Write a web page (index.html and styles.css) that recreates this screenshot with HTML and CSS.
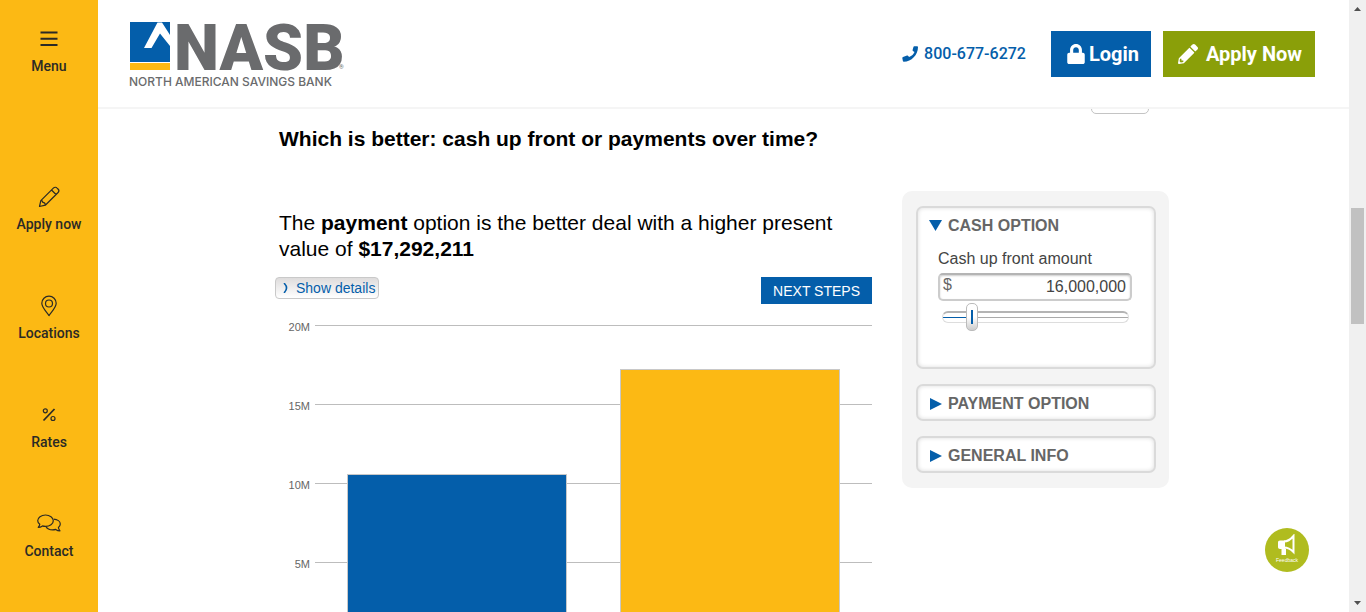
FILE: index.html
```html
<!DOCTYPE html>
<html lang="en">
<head>
<meta charset="utf-8">
<meta name="viewport" content="width=device-width, initial-scale=1">
<title>NASB - Cash up front or payments over time</title>
<link rel="stylesheet" href="styles.css">
</head>
<body>
<div class="shell">
  <nav class="sidebar" aria-label="Main">
    <button class="side-item side-menu" type="button">
      <svg class="side-icon" viewBox="0 0 24 24"><path d="M3.500 4.500h17M3.500 10.800h17M3.500 17h17" stroke-width="2"/></svg>
      <span>Menu</span>
    </button>
    <a class="side-item" href="#apply">
      <svg class="side-icon" viewBox="0 0 24 24"><path d="M2.500 21.500l1.300-5.800L16.600 2.900c1-1 2.600-.8 3.500.2l.9.900c1 1 1.100 2.500.1 3.500L8.300 20.200zM3.800 15.700c1.300-.1 2 .5 1.900 1.700 1.500-.1 2.600.8 2.600 2.800M14.500 5l4.500 4.500"/></svg>
      <span>Apply now</span>
    </a>
    <a class="side-item" href="#locations">
      <svg class="side-icon" viewBox="0 0 24 24"><path d="M12 21.600C9.800 18 4.800 13.600 4.800 9.300a7.200 7.200 0 0 1 14.400 0c0 4.300-5 8.700-7.200 12.300z"/><circle cx="12" cy="9.500" r="3.500"/></svg>
      <span>Locations</span>
    </a>
    <a class="side-item" href="#rates">
      <svg class="side-icon" viewBox="0 0 24 24"><path d="M17.500 6L6.500 17.500" stroke-width="1.800"/><circle cx="8.300" cy="7.800" r="2"/><circle cx="16" cy="15.500" r="2"/></svg>
      <span>Rates</span>
    </a>
    <a class="side-item" href="#contact">
      <svg class="side-icon" viewBox="0 0 24 24"><path d="M8.500 3c4.300 0 7.800 2.500 7.800 5.700s-3.500 5.700-7.800 5.700c-1.100 0-2.100-.1-3-.5-1.300.9-2.700 1.400-4.300 1.400 1-1.100 1.500-2.100 1.600-3.100C1.500 11.200.700 10 .700 8.700.700 5.500 4.200 3 8.500 3z"/><path d="M16.600 7.100c3.800.2 6.700 2.300 6.700 5 0 1.300-.7 2.500-1.900 3.400.1 1.200.6 2.200 1.600 3.300-1.700 0-3.100-.5-4.300-1.400-1 .3-1.900.5-3 .5-3.100 0-5.700-1.300-6.800-3.400"/></svg>
      <span>Contact</span>
    </a>
  </nav>

  <div class="page">
    <header class="header">
      <a class="brand" href="#home" aria-label="NASB home">
        <svg class="logo" width="216" height="68" viewBox="0 0 216 68">
          <path class="logo-blue" d="M1 2h40v40H1z"/>
          <path class="logo-yellow" d="M1 43h40v7H1z"/>
          <path class="logo-white" d="M28.500 2.500H33L41 15v11l-10-12.500L22.500 28H15z"/>
          <text class="logo-name" x="45" y="50">NASB</text>
          <text class="logo-tag" x="0" y="66">NORTH AMERICAN SAVINGS BANK</text>
          <text class="logo-mark" x="210" y="49">®</text>
        </svg>
      </a>
      <div class="header-actions">
        <a class="phone" href="tel:8006776272">
          <svg width="16" height="16" viewBox="0 0 16 16"><path d="M15.200.300l-2.900-.1c-.4 0-.7.200-.8.500l-.9 3.400c-.1.300 0 .7.300.9l1.600 1.100c-.9 2.200-2.600 3.900-5.400 4.900L5.900 9.700c-.3-.3-.6-.3-.9-.2l-4 1.400c-.5.200-.8.500-.7 1l.6 3c.1.500.4.800.9.800C9.500 15.500 15.900 9 16 1.200c0-.5-.3-.9-.8-.9z"/></svg>
          <span>800-677-6272</span>
        </a>
        <a class="cta cta-login" href="#login">
          <svg width="18" height="20" viewBox="0 0 448 512"><path d="M400 224h-24v-72C376 68.200 307.800 0 224 0S72 68.200 72 152v72H48c-26.500 0-48 21.500-48 48v192c0 26.500 21.500 48 48 48h352c26.500 0 48-21.500 48-48V272c0-26.500-21.500-48-48-48zm-104 0H152v-72c0-39.700 32.300-72 72-72s72 32.300 72 72v72z"/></svg>
          <span>Login</span>
        </a>
        <a class="cta cta-apply" href="#apply-now">
          <svg width="20" height="20" viewBox="0 0 512 512"><path d="M497.900 142.100l-46.100 46.100c-4.700 4.700-12.300 4.700-17 0l-111-111c-4.700-4.700-4.700-12.300 0-17l46.100-46.100c18.700-18.700 49.100-18.700 67.900 0l60.100 60.100c18.800 18.700 18.800 49.100 0 67.900zM284.200 99.800L21.600 362.400.400 483.900c-2.900 16.400 11.400 30.600 27.800 27.800l121.500-21.300 262.600-262.600c4.700-4.700 4.700-12.300 0-17l-111-111c-4.800-4.700-12.400-4.700-17.100 0zM88 424h48v36.300l-64.500 11.300-31.100-31.100L51.700 376H88v48z"/></svg>
          <span>Apply Now</span>
        </a>
      </div>
    </header>

    <main class="content">
      <div class="tools"><button class="tool" type="button" aria-label="Print"></button></div>
      <h1 class="title">Which is better: cash up front or payments over time?</h1>
      <div class="columns">
        <section class="results">
          <p class="summary">The <b>payment</b> option is the better deal with a higher present value of <b>$17,292,211</b></p>
          <div class="actions">
            <button class="details" type="button"><svg width="6" height="10" viewBox="0 0 6 10"><path d="M1 0c3.500 3.500 3.500 6.500 0 10"/></svg>Show details</button>
            <button class="next" type="button">NEXT STEPS</button>
          </div>
          <div class="chart">
            <div class="scale">
              <div class="tick"><span>20M</span><i></i></div>
              <div class="tick"><span>15M</span><i></i></div>
              <div class="tick"><span>10M</span><i></i></div>
              <div class="tick"><span>5M</span><i></i></div>
            </div>
            <div class="bars">
              <div class="bar bar-cash" style="height:53%"></div>
              <div class="bar bar-payment" style="height:86%"></div>
            </div>
          </div>
        </section>

        <aside class="panel">
          <section class="card card-open">
            <button class="card-title" type="button" aria-expanded="true"><svg width="13" height="13" viewBox="0 0 13 13"><path d="M0 0h13L6.500 11z"/></svg>CASH OPTION</button>
            <div class="field">
              <label for="amount">Cash up front amount</label>
              <div class="money"><span>$</span><input id="amount" type="text" value="16,000,000"></div>
              <input class="slider" type="range" min="1000000" max="115000000" step="100000" value="16000000" aria-label="Cash up front amount slider">
            </div>
          </section>
          <section class="card">
            <button class="card-title" type="button" aria-expanded="false"><svg width="13" height="13" viewBox="0 0 13 13"><path d="M1 0l12 6L1 12z"/></svg>PAYMENT OPTION</button>
          </section>
          <section class="card">
            <button class="card-title" type="button" aria-expanded="false"><svg width="13" height="13" viewBox="0 0 13 13"><path d="M1 0l12 6L1 12z"/></svg>GENERAL INFO</button>
          </section>
        </aside>
      </div>
    </main>

    <button class="feedback" type="button">
      <svg width="18" height="22" viewBox="0 0 18 22"><path class="horn" d="M6 7.500c3.500 0 6.500-2 9.500-5.500v16c-3-3-6-4.500-9.500-4.500"/><path class="grip" d="M2 6.500h5v8h1V21H3.500v-6H2c-1.300 0-2-.7-2-2V8.500c0-1.300.7-2 2-2z"/></svg>
      <span>Feedback</span>
    </button>
  </div>

  <div class="scrollbar" aria-hidden="true">
    <svg width="9" height="5" viewBox="0 0 9 5"><path d="M1 5l3.500-4L8 5z"/></svg>
    <div class="scroll-thumb"></div>
    <svg width="9" height="5" viewBox="0 0 9 5"><path d="M1 0l3.500 4L8 0z"/></svg>
  </div>
</div>
</body>
</html>
```
FILE: styles.css
```css
:root {
  --blue: #045eaa;
  --yellow: #fcb914;
  --green: #8a9f09;
  --grey: #666;
  --line: #bdbdbd;
}

* {
  box-sizing: border-box;
}

body {
  margin: 0;
  background: #fff;
  color: #000;
  font-family: "Liberation Sans", Arial, sans-serif;
}

button,
input {
  font-family: inherit;
}

.shell {
  display: grid;
  grid-template-columns: 98px 1fr 17px;
  height: 100vh;
  overflow: hidden;
}

.sidebar {
  display: flex;
  flex-direction: column;
  gap: 62px;
  padding-top: 28px;
  background: var(--yellow);
}

.side-item {
  display: flex;
  flex-direction: column;
  align-items: center;
  gap: 7px;
  padding: 0;
  border: 0;
  background: none;
  color: #2b2a26;
  font: 500 14px/16px Roboto, sans-serif;
  text-decoration: none;
}

.side-menu {
  gap: 6px;
  margin-bottom: 49px;
}

.side-icon {
  width: 24px;
  height: 24px;
  fill: none;
  stroke: #2b2a26;
  stroke-width: 1.2;
  stroke-linejoin: round;
}

.page {
  position: relative;
  min-width: 0;
  overflow: hidden;
}

.header {
  position: relative;
  z-index: 1;
  display: flex;
  justify-content: space-between;
  align-items: center;
  height: 109px;
  padding: 0 34px 0 31px;
  border-bottom: 2px solid #f5f5f5;
  background: #fff;
}

.logo {
  display: block;
  overflow: visible;
}

.logo-blue {
  fill: var(--blue);
}

.logo-yellow {
  fill: var(--yellow);
}

.logo-white {
  fill: #fff;
}

.logo-name {
  fill: #6a6b6d;
  font: 900 64px Roboto, sans-serif;
}

.logo-tag {
  fill: #6a6b6d;
  font: 500 12px Inter, sans-serif;
}

.logo-mark {
  fill: #6a6b6d;
  font: 6px Roboto, sans-serif;
}

.header-actions {
  display: flex;
  align-items: center;
  gap: 12px;
}

.phone {
  display: flex;
  align-items: center;
  gap: 6px;
  margin-right: 13px;
  color: var(--blue);
  font: 500 16px/20px Roboto, sans-serif;
  text-decoration: none;
}

.header-actions svg {
  fill: currentColor;
}

.cta {
  display: flex;
  align-items: center;
  justify-content: center;
  height: 46px;
  color: #fff;
  font: 700 20px/24px Roboto, sans-serif;
  text-decoration: none;
}

.cta-login {
  gap: 4px;
  padding: 0 12px 0 16px;
  background: var(--blue);
}

.cta-apply {
  gap: 8px;
  padding: 0 13px 0 15px;
  background: var(--green);
}

.content {
  max-width: 897px;
  margin: 0 auto;
  padding-right: 3px;
}

.tools {
  display: flex;
  justify-content: flex-end;
  margin-top: -17px;
  padding-right: 20px;
}

.tool {
  width: 58px;
  height: 22px;
  border: 1px solid #c4c4c4;
  border-radius: 5px;
  background: #fff;
}

.title {
  margin: 12px 4px 39px;
  font-size: 21px;
  line-height: 26px;
}

.columns {
  display: grid;
  grid-template-columns: 1fr 267px;
  align-items: start;
  gap: 30px;
}

.summary {
  margin: 19px 4px 15px;
  font-size: 21px;
  line-height: 26px;
}

.actions {
  display: flex;
  justify-content: space-between;
  align-items: flex-start;
}

.details {
  display: flex;
  align-items: center;
  gap: 7px;
  height: 22px;
  padding: 0 3px 0 7px;
  border: 1px solid #c9c9c9;
  border-radius: 4px;
  background: linear-gradient(#dedcdc, #fff);
  color: var(--blue);
  font-size: 14px;
}

.details svg {
  fill: none;
  stroke: var(--blue);
  stroke-width: 1.5;
}

.next {
  height: 27px;
  padding: 0 12px;
  border: 0;
  background: var(--blue);
  color: #fff;
  font-size: 14px;
}

.chart {
  display: grid;
  margin-top: 21px;
}

.scale,
.bars {
  grid-area: 1 / 1;
}

.tick {
  display: grid;
  grid-template-columns: 35px 1fr;
  gap: 5px;
  height: 79px;
  color: var(--grey);
  font-size: 11px;
  line-height: 14px;
}

.tick span {
  margin-top: -5px;
  text-align: right;
}

.tick i {
  border-top: 1px solid var(--line);
}

.bars {
  display: flex;
  align-items: flex-end;
  gap: 53px;
  margin-left: 40px;
  padding: 0 32px;
}

.bar {
  flex: 1;
  border: 1px solid #c8c8c8;
  border-bottom: 0;
}

.bar-cash {
  background: var(--blue);
}

.bar-payment {
  background: var(--yellow);
}

.panel {
  display: flex;
  flex-direction: column;
  gap: 15px;
  padding: 15px 13px 15px 14px;
  border-radius: 10px;
  background: #f4f4f4;
}

.card {
  padding: 9px 11px 6px;
  border: 2px solid #dadada;
  border-radius: 7px;
  background: #fff;
  box-shadow: inset 0 0 4px #ddd;
}

.card-open {
  padding-bottom: 36px;
}

.card-title {
  display: flex;
  align-items: center;
  gap: 6px;
  padding: 0;
  border: 0;
  background: none;
  color: var(--grey);
  font-size: 16px;
  font-weight: 700;
  line-height: 18px;
}

.card-title svg {
  fill: var(--blue);
}

.field {
  display: flex;
  flex-direction: column;
  padding: 14px 11px 0 9px;
  color: #444;
  font-size: 16px;
  line-height: 20px;
}

.money {
  display: flex;
  height: 28px;
  margin-top: 4px;
  padding: 0 4px 0 3px;
  border: 2px solid #ccc;
  border-top-color: #b4b4b4;
  border-radius: 5px;
  box-shadow: inset 0 1px 2px #ccc;
}

.money span {
  color: var(--grey);
}

.money input {
  flex: 1;
  min-width: 0;
  padding: 0;
  border: 0;
  outline: 0;
  background: none;
  color: #444;
  font-size: 16px;
  text-align: right;
}

.slider {
  width: auto;
  height: 28px;
  margin: 2px 3px 0 4px;
  appearance: none;
  background: none;
}

.slider::-webkit-slider-runnable-track {
  height: 12px;
  border: 1px solid #ddd;
  border-top: 2px solid #b4b4b4;
  border-radius: 6px;
  background:
    linear-gradient(var(--blue), var(--blue)) 0 4px / 24px 1px no-repeat,
    linear-gradient(#aaa, #aaa) 0 4px / 100% 1px no-repeat,
    #fff;
}

.slider::-webkit-slider-thumb {
  width: 12px;
  height: 28px;
  margin-top: -10px;
  appearance: none;
  border: 1px solid #bbb;
  border-radius: 5px;
  background:
    linear-gradient(var(--blue), var(--blue)) center / 2px 14px no-repeat,
    linear-gradient(#fff 50%, #ccc);
}

.feedback {
  position: absolute;
  right: 40px;
  bottom: 40px;
  display: flex;
  flex-direction: column;
  align-items: center;
  width: 44px;
  height: 44px;
  padding: 6px 0 0;
  border: 0;
  border-radius: 50%;
  background: #b0bc1f;
  color: #fff;
  font-size: 5px;
  line-height: 8px;
}

.horn {
  fill: none;
  stroke: #fff;
  stroke-width: 2;
}

.grip {
  fill: #fff;
}

.scrollbar {
  position: relative;
  display: flex;
  flex-direction: column;
  justify-content: space-between;
  align-items: center;
  padding: 6px 0;
  background: #f0f0f0;
  fill: #505050;
}

.scroll-thumb {
  position: absolute;
  top: 34%;
  right: 2px;
  left: 2px;
  height: 19%;
  background: #c1c1c1;
}
```
